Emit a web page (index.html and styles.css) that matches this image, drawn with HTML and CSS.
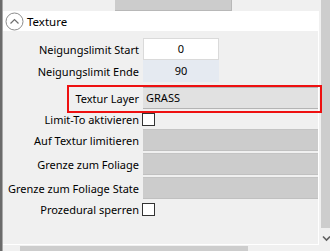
FILE: index.html
```html
<!DOCTYPE html>
<html>
<head>
  <title>Texture</title>
  <meta name="viewport" content="width=device-width, initial-scale=1">
  <link rel="stylesheet" href="styles.css">
</head>
<body>
<div class="window">
  <div class="main">
    <div class="topstrip"><div class="topbar"></div></div>

    <div class="panel">
      <div class="header">
        <svg class="collapse" width="19" height="19" viewBox="0 0 19 19">
          <circle cx="9.5" cy="9.5" r="8.5" fill="#fff" stroke="#8c8c8c" stroke-width="1"/>
          <path d="M5.5 11.5 L9.5 7.5 L13.5 11.5" fill="none" stroke="#6e6e6e" stroke-width="1.2"/>
        </svg>
        <span class="title">Texture</span>
      </div>

      <div class="body">
        <div class="row r1">
          <div class="lbl">Neigungslimit Start</div>
          <div class="field num white">0</div>
        </div>
        <div class="row r2">
          <div class="lbl">Neigungslimit Ende</div>
          <div class="field num blue">90</div>
        </div>
        <div class="row r3">
          <div class="lbl">Textur Layer</div>
          <div class="field combo">GRASS</div>
        </div>
        <div class="row r4">
          <div class="lbl">Limit-To aktivieren</div>
          <div class="check"></div>
        </div>
        <div class="row r5">
          <div class="lbl">Auf Textur limitieren</div>
          <div class="field gray"></div>
        </div>
        <div class="row r6">
          <div class="lbl">Grenze zum Foliage</div>
          <div class="field gray"></div>
        </div>
        <div class="row r7">
          <div class="lbl">Grenze zum Foliage State</div>
          <div class="field gray"></div>
        </div>
        <div class="row r8">
          <div class="lbl">Prozedural sperren</div>
          <div class="check"></div>
        </div>
      </div>
    </div>

    <div class="bottomstrip"><div class="hthumb"></div></div>
  </div>

  <div class="vscroll">
    <div class="vthumb"></div>
    <svg class="arrow" width="9" height="7" viewBox="0 0 9 7">
      <path d="M1 1.5 L4.5 5 L8 1.5" fill="none" stroke="#606060" stroke-width="1.6"/>
    </svg>
  </div>

  <!-- red marker round the Textur Layer row -->
  <div class="marker"></div>
</div>
</body>
</html>
```

FILE: styles.css
```css
/* property panel */
body {
  margin: 0;
  font-family: "Noto Sans", "Open Sans", Arial, sans-serif;
  font-size: 11px;
  color: #000;
  background: #f0f0f0;
}

.window {
  position: relative;
  display: flex;
  width: 330px;
  height: 251px;
  overflow: hidden;
}

.main {
  width: 316px;
  border-left: 2px solid #6b6b6b;
  box-shadow: inset 1px 0 0 #a9a9a9;
  padding-left: 1px;
  display: flex;
  flex-direction: column;
}

.topstrip {
  height: 12px;
}
.topbar {
  margin-left: 112px;
  width: 116px;
  height: 10px;
  background: #cccccc;
  border-right: 1px solid #b8b8b8;
  border-bottom: 1px solid #b8b8b8;
}

.panel {
  width: 315px;
  border-right: 1px solid #fff;
}

.header {
  height: 20px;
  background: #fff;
  display: flex;
  align-items: center;
}
.collapse {
  margin-left: 2px;
  margin-top: 1px;
}
.title {
  margin-left: 3px;
  font-size: 11.5px;
}

.body {
  height: 214px;
  border-bottom: 1px solid #fff;
  padding-top: 7px;
  box-sizing: border-box;
}

.row {
  display: flex;
  align-items: center;
  height: 22px;
}
.r3 { margin-top: 5px; }
.r4 { height: 17px; margin-top: 2px; }
.r5 { margin-top: 1px; }
.r6, .r7 { margin-top: 2px; }
.r8 { height: 16px; margin-top: 2px; }

.lbl {
  width: 136px;
  padding-right: 4px;
  text-align: right;
  white-space: nowrap;
}

.field {
  height: 22px;
  box-sizing: border-box;
  line-height: 20px;
}
.num {
  width: 76px;
  text-align: center;
}
.white {
  background: #fff;
  border: 1px solid #dadada;
}
.blue {
  background: #e5eaf1;
  border: 1px solid #e5eaf1;
}
.combo {
  width: 175px;
  background: #e1e1e1;
  border-top: 1px solid #b4b4b4;
  border-bottom: 1px solid #b4b4b4;
  padding-left: 3px;
}
.gray {
  width: 175px;
  background: #cccccc;
  border-top: 1px solid #c4c4c4;
  border-bottom: 1px solid #c0c0c0;
}

.check {
  width: 11px;
  height: 11px;
  margin-left: -1px;
  background: #fff;
  border: 1px solid #333;
}

.bottomstrip {
  flex: 1;
}
.hthumb {
  margin-left: 17px;
  margin-top: 1px;
  width: 228px;
  height: 5px;
  background: #cdcdcd;
}

.vscroll {
  margin-left: 2px;
  width: 11px;
  display: flex;
  flex-direction: column;
  align-items: center;
}
.vthumb {
  width: 11px;
  height: 228px;
  background: #cdcdcd;
}
.arrow {
  margin-top: 7px;
}

.marker {
  position: absolute;
  left: 67px;
  top: 85px;
  width: 251px;
  height: 24px;
  border: 2px solid #ee1010;
}
```
